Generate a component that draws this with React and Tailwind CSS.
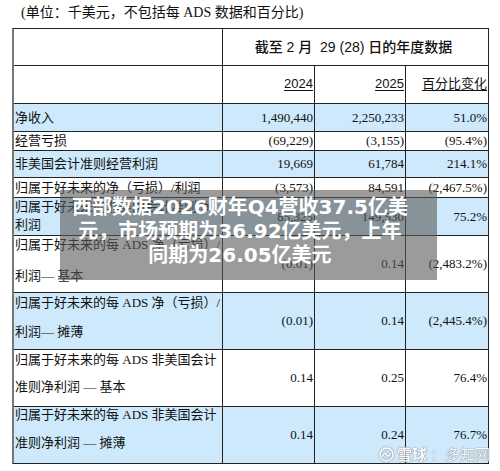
import React from 'react';

const serif = 'font-["Liberation_Serif","Noto_Sans_CJK_SC",serif]';

const rows = [
  { label: ['净收入'], vals: ['1,490,440', '2,250,233', '51.0%'], blue: true, h: 'h-[27px]' },
  { label: ['经营亏损'], vals: ['(69,229)', '(3,155)', '(95.4%)'], blue: false, h: 'h-[18px]' },
  { label: ['非美国会计准则经营利润'], vals: ['19,669', '61,784', '214.1%'], blue: true, h: 'h-[26px]' },
  { label: ['归属于好未来的净（亏损）/利润'], vals: ['(3,573)', '84,591', '(2,467.5%)'], blue: false, h: 'h-[19px]' },
  {
    label: ['归属于好未来的非美国会计准则净', '利润'],
    vals: ['85,325', '149,530', '75.2%'],
    blue: true,
    h: 'h-[37px]',
    lab: 'pt-[1px] gap-[2px]',
  },
  {
    label: ['归属于好未来的每 ADS 净（亏损）/', '利润— 基本'],
    vals: ['(0.01)', '0.14', '(2,483.2%)'],
    blue: false,
    h: 'h-[56px]',
    lab: 'pt-[1px] gap-[15px]',
  },
  {
    label: ['归属于好未来的每 ADS 净（亏损）/', '利润— 摊薄'],
    vals: ['(0.01)', '0.14', '(2,445.4%)'],
    blue: true,
    h: 'h-[56px]',
    lab: 'pt-[2px] gap-[13px]',
  },
  {
    label: ['归属于好未来的每 ADS 非美国会计', '准则净利润 — 基本'],
    vals: ['0.14', '0.25', '76.4%'],
    blue: false,
    h: 'h-[56px]',
    lab: 'pt-[2px] gap-[11px]',
  },
  {
    label: ['归属于好未来的每 ADS 非美国会计', '准则净利润 — 摊薄'],
    vals: ['0.14', '0.24', '76.7%'],
    blue: true,
    h: 'h-[56px]',
    lab: 'pt-0 gap-[12px]',
  },
];

const XueqiuLogo = () => (
  <svg width="15" height="15" viewBox="0 0 16 16" className="drop-shadow-[0_0_1px_#777]">
    <circle cx="8" cy="8" r="6.8" fill="none" stroke="white" strokeWidth="1.6" />
    <path
      d="M3.8 9.6c1.2-3.2 3-3.4 4.2-1.4s3 1.8 4.2-1.4"
      fill="none"
      stroke="white"
      strokeWidth="1.6"
      strokeLinecap="round"
    />
  </svg>
);

export default function App() {
  return (
    <div className="relative w-[500px] h-[471px] bg-white overflow-hidden text-[#111]">
      {/* Unit note */}
      <div className={`pt-[3px] pl-[21px] text-[14px] leading-[20px] ${serif}`}>
        (单位：千美元，不包括每 ADS 数据和百分比)
      </div>

      {/* Table */}
      <div className="mt-[5px] ml-[12px] w-[477px] border border-[#222] border-l-2 border-l-[#777]">
        <div className="grid grid-cols-[208px_91px_90px_82px] gap-px bg-[#222]">
          {/* Header row 1 */}
          <div className="bg-white h-[36px]" />
          <div className="col-span-3 bg-white h-[36px] flex items-center justify-center pr-[4px] pt-[1px] text-[14px] font-medium font-['Liberation_Sans','Noto_Sans_CJK_SC',sans-serif]">
            截至 2 月&nbsp; 29 (28) 日的年度数据
          </div>

          {/* Header row 2 */}
          <div className="bg-white h-[37px]" />
          {['2024', '2025', '百分比变化'].map((t) => (
            <div
              key={t}
              className="bg-white h-[37px] flex items-center justify-end pr-px pb-[1px] text-[13px] font-['Liberation_Sans','Noto_Sans_CJK_SC',sans-serif]"
            >
              <span className="underline underline-offset-[2px] decoration-1">{t}</span>
            </div>
          ))}

          {/* Body rows */}
          {rows.map((r, i) => {
            const bg = r.blue ? 'bg-[#cde9fb]' : 'bg-white';
            return (
              <React.Fragment key={i}>
                <div
                  className={`${bg} ${r.h} pl-px text-[13px] leading-[16px] flex flex-col ${
                    r.lab ? r.lab : 'justify-center'
                  } ${serif} whitespace-nowrap`}
                >
                  {r.label.map((l) => (
                    <div key={l}>{l}</div>
                  ))}
                </div>
                {r.vals.map((v, j) => (
                  <div
                    key={j}
                    className={`${bg} ${r.h} flex items-center justify-end pr-px text-[13px] leading-[16px] ${serif}`}
                  >
                    {v}
                  </div>
                ))}
              </React.Fragment>
            );
          })}
        </div>
      </div>

      {/* Headline overlay */}
      <div className="absolute left-[60px] top-[190px] w-[377px] h-[90px] bg-[rgba(88,88,88,0.6)] pt-[5px] pr-[17px] text-center text-white font-bold text-[20px] leading-[24px] font-['DejaVu_Sans','Noto_Sans_CJK_SC',sans-serif] whitespace-nowrap">
        <div>西部数据2026财年Q4营收37.5亿美</div>
        <div>元，市场预期为36.92亿美元，上年</div>
        <div>同期为26.05亿美元</div>
      </div>

      {/* Watermark */}
      <div className="absolute left-[379px] top-[446px] flex items-center gap-[3px] opacity-90 text-white text-[15px] leading-[16px] font-['Noto_Sans_CJK_SC',sans-serif] [text-shadow:0_0_1px_#666,0_0_1px_#666]">
        <XueqiuLogo />
        <span className="font-bold">雪球</span>
        <span>：多知网</span>
      </div>
    </div>
  );
}
